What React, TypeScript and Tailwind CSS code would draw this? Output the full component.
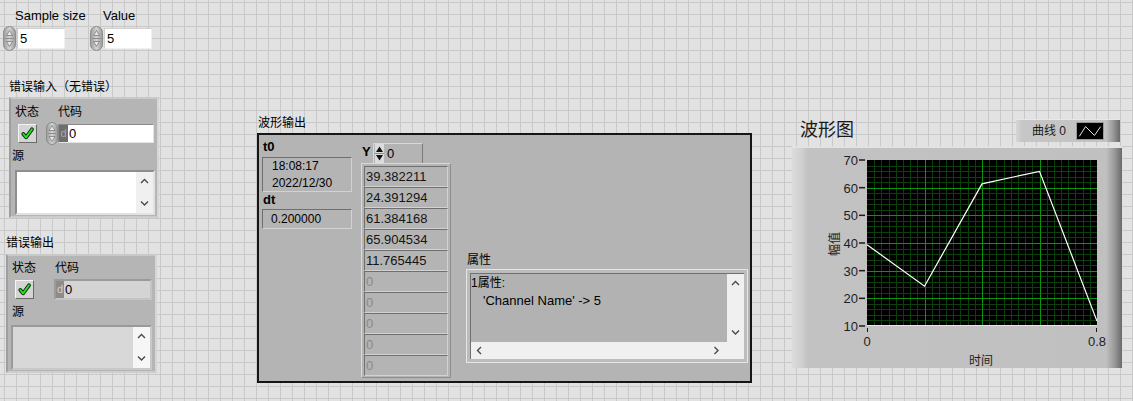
import { useId } from 'react'

const insetDark =
	'border border-t-[#6f6f6f] border-l-[#6f6f6f] border-r-[#d2d2d2] border-b-[#d2d2d2]'

function Spinner({ w = 13, h = 25 }: { w?: number; h?: number }) {
	const id = 'sp' + useId().replace(/[^a-zA-Z0-9]/g, '')
	const cx = w / 2
	const m = h / 2
	return (
		<svg width={w} height={h} viewBox={`0 0 ${w} ${h}`} className="shrink-0">
			<defs>
				<linearGradient id={id} x1="0" x2="1" y1="0" y2="0">
					<stop offset="0" stopColor="#9a9a9a" />
					<stop offset="0.5" stopColor="#d4d4d4" />
					<stop offset="1" stopColor="#989898" />
				</linearGradient>
			</defs>
			<rect
				x="0.5"
				y="0.5"
				width={w - 1}
				height={h - 1}
				rx={(w - 1) / 2}
				fill={`url(#${id})`}
				stroke="#8c8c8c"
			/>
			<line x1="2" x2={w - 2} y1={m} y2={m} stroke="#8c8c8c" />
			<path
				d={`M${cx - 3} ${m - 3} L${cx} ${m - 8} L${cx + 3} ${m - 3} Z`}
				fill="#e8e8e8"
				stroke="#7a7a7a"
				strokeWidth="0.8"
			/>
			<path
				d={`M${cx - 3} ${m + 3} L${cx} ${m + 8} L${cx + 3} ${m + 3} Z`}
				fill="#e8e8e8"
				stroke="#7a7a7a"
				strokeWidth="0.8"
			/>
		</svg>
	)
}

function StatusButton() {
	return (
		<div className="w-[19px] h-[19px] shrink-0 bg-[#d4d4d4] border border-t-[#f4f4f4] border-l-[#f4f4f4] border-r-[#6a6a6a] border-b-[#6a6a6a] flex items-center justify-center">
			<svg width="13" height="13" viewBox="0 0 14 14">
				<path
					d="M2.5 7.5 L5.5 11.2 L11.8 2.5"
					fill="none"
					stroke="#0a2a0a"
					strokeWidth="4"
					strokeLinecap="round"
					strokeLinejoin="round"
				/>
				<path
					d="M2.5 7.5 L5.5 11.2 L11.8 2.5"
					fill="none"
					stroke="#26e626"
					strokeWidth="2"
					strokeLinecap="round"
					strokeLinejoin="round"
				/>
			</svg>
		</div>
	)
}

function Chevron({ dir }: { dir: 'up' | 'down' | 'left' | 'right' }) {
	const d = {
		up: 'M1 5 L4.5 1.5 L8 5',
		down: 'M1 1.5 L4.5 5 L8 1.5',
		left: 'M5 1 L1.5 4.5 L5 8',
		right: 'M1.5 1 L5 4.5 L1.5 8',
	}[dir]
	const horiz = dir === 'up' || dir === 'down'
	return (
		<svg
			width={horiz ? 9 : 7}
			height={horiz ? 7 : 9}
			viewBox={horiz ? '0 0 9 7' : '0 0 7 9'}
		>
			<path d={d} fill="none" stroke="#4a4a4a" strokeWidth="1.4" />
		</svg>
	)
}

function VScroll({ bg }: { bg: string }) {
	return (
		<div className={`w-[17px] h-full flex flex-col items-center justify-between py-[6px] ${bg}`}>
			<Chevron dir="up" />
			<Chevron dir="down" />
		</div>
	)
}

function NumControl({ label, labelPad }: { label: string; labelPad: string }) {
	return (
		<div className="w-[62px] flex flex-col">
			<span className={`whitespace-nowrap leading-[14px] text-[13px] ${labelPad}`}>{label}</span>
			<div className="flex items-center mt-[3px]">
				<Spinner />
				<div className="ml-[1px] w-[48px] h-[21px] bg-white border border-t-[#cfcfcf] border-l-[#cfcfcf] border-r-[#f0f0f0] border-b-[#f0f0f0] pl-[2px] text-[13px] leading-[19px]">
					5
				</div>
			</div>
		</div>
	)
}

function ErrorIn() {
	return (
		<div className="ml-[9px] w-[150px] h-[121px] bg-[#b5b5b5] border-2 border-t-[#c9c9c9] border-l-[#9e9e9e] border-r-[#d6d6d6] border-b-[#cdcdcd] flex flex-col">
			<div className="flex pt-[6px] pl-[4px] text-[12px] leading-[14px]">
				<span className="w-[43px]">状态</span>
				<span>代码</span>
			</div>
			<div className="flex items-center h-[23px] mt-[3px]">
				<div className="ml-[7px]">
					<StatusButton />
				</div>
				<div className="ml-[9px]">
					<Spinner w={12} h={23} />
				</div>
				<div className="flex h-[19px] border border-t-[#8a8a8a] border-l-[#8a8a8a] border-r-[#e4e4e4] border-b-[#e4e4e4]">
					<span className="w-[9px] bg-[#6e6e6e] text-[#a9a9a9] text-[11px] leading-[17px] text-center">
						d
					</span>
					<span className="w-[85px] bg-white text-[13px] leading-[17px] pl-[1px]">0</span>
				</div>
			</div>
			<span className="mt-[4px] pl-[1px] text-[12px] leading-[14px]">源</span>
			<div className="mt-[7px] ml-[4px] w-[140px] h-[45px] flex border-2 border-t-[#8e8e8e] border-l-[#8e8e8e] border-r-[#e2e2e2] border-b-[#e2e2e2]">
				<div className="flex-1 bg-white" />
				<VScroll bg="bg-[#f0f0f0]" />
			</div>
		</div>
	)
}

function ErrorOut() {
	return (
		<div className="ml-[6px] w-[151px] h-[119px] bg-[#b5b5b5] border-2 border-t-[#c9c9c9] border-l-[#9e9e9e] border-r-[#d6d6d6] border-b-[#cdcdcd] flex flex-col">
			<div className="flex pt-[5px] pl-[4px] text-[12px] leading-[14px]">
				<span className="w-[43px]">状态</span>
				<span>代码</span>
			</div>
			<div className="flex items-center h-[23px] mt-[3px]">
				<div className="ml-[7px]">
					<StatusButton />
				</div>
				<div className="ml-[20px] flex w-[98px] h-[21px] border-2 border-t-[#9a9a9a] border-l-[#9a9a9a] border-r-[#c4c4c4] border-b-[#c4c4c4]">
					<span className="w-[8px] bg-[#8c8c8c] text-[#cfcfcf] text-[11px] leading-[17px] text-center">
						d
					</span>
					<span className="flex-1 bg-[#d4d4d4] text-[13px] leading-[17px] pl-[1px]">0</span>
				</div>
			</div>
			<span className="mt-[4px] pl-[4px] text-[12px] leading-[14px]">源</span>
			<div className="mt-[6px] ml-[3px] w-[141px] h-[45px] flex border-2 border-t-[#9a9a9a] border-l-[#9a9a9a] border-r-[#c8c8c8] border-b-[#c8c8c8]">
				<div className="flex-1 bg-[#d8d8d8]" />
				<VScroll bg="bg-[#f6f6f6]" />
			</div>
		</div>
	)
}

const yValues = ['39.382211', '24.391294', '61.384168', '65.904534', '11.765445', '0', '0', '0', '0', '0']

function WaveformOut() {
	return (
		<div className="ml-[97px] mt-[116px] flex flex-col">
			<span className="text-[12px] leading-[14px] pl-[1px]">波形输出</span>
			<div className="mt-[3px] w-[495px] h-[250px] bg-[#b4b4b4] border-2 border-[#161616] flex items-start">
				{/* t0 / dt */}
				<div className="ml-[3px] w-[90px] flex flex-col">
					<span className="pt-[5px] pl-[1px] font-bold text-[13px] leading-[14px]">t0</span>
					<div className={`mt-[3px] h-[35px] pl-[9px] text-[12px] leading-[16.5px] ${insetDark}`}>
						<div>18:08:17</div>
						<div>2022/12/30</div>
					</div>
					<span className="mt-[1px] pl-[1px] font-bold text-[13px] leading-[14px]">dt</span>
					<div className={`mt-[2px] h-[20px] pl-[8px] text-[12px] leading-[18px] ${insetDark}`}>
						0.200000
					</div>
				</div>
				{/* Y array */}
				<div className="ml-[9px] mt-[8px] flex flex-col">
					<div className="flex items-start">
						<span className="pl-[1px] w-[12px] font-bold text-[13px] leading-[14px] mt-[2px]">Y</span>
						<div className="w-[50px] h-[21px] flex items-center bg-[#b4b4b4] border border-t-[#d8d8d8] border-l-[#d8d8d8] border-r-[#7a7a7a] border-b-[#7a7a7a]">
							<svg width="9" height="19" viewBox="0 0 9 19" className="ml-[1px] bg-[#dcdcdc]">
								<path d="M1 8 L4.5 2.5 L8 8 Z" fill="#111" />
								<line x1="0" x2="9" y1="9.5" y2="9.5" stroke="#8a8a8a" />
								<path d="M1 11 L8 11 L4.5 16.5 Z" fill="#111" />
							</svg>
							<span className="ml-[3px] text-[13px] leading-[14px]">0</span>
						</div>
					</div>
					<div className="-mt-[1px] w-[90px] h-[215px] p-[2px] border border-t-[#dadada] border-l-[#dadada] border-r-[#8e8e8e] border-b-[#8e8e8e] flex flex-col">
						{yValues.map((v, i) => (
							<div
								key={i}
								className={`h-[21px] pl-[1px] text-[13px] leading-[19px] ${insetDark} ${
									i < 5 ? 'text-[#141414]' : 'text-[#8a8a8a]'
								}`}
							>
								{v}
							</div>
						))}
					</div>
				</div>
				{/* attributes */}
				<div className="ml-[15px] mt-[118px] flex flex-col">
					<span className="pl-[1px] text-[12px] leading-[14px]">属性</span>
					<div className="mt-[2px] w-[282px] h-[94px] border border-[#e6e6e6] bg-[#bcbcbc] p-[3px]">
						<div className="w-full h-full flex flex-col border-t border-l border-[#707070]">
							<div className="flex flex-1">
								<div className="flex-1 bg-[#b2b2b2] text-[12px] leading-[17px] pt-[1px]">
									<div>1属性:</div>
									<div className="pl-[12px] text-[13px]">'Channel Name' -&gt; 5</div>
								</div>
								<VScroll bg="bg-[#f0f0f0]" />
							</div>
							<div className="h-[17px] flex items-center justify-between bg-[#f0f0f0] pl-[5px] pr-[24px]">
								<Chevron dir="left" />
								<Chevron dir="right" />
							</div>
						</div>
					</div>
				</div>
			</div>
		</div>
	)
}

// plot area inside the graph frame
const PX0 = 75
const PX1 = 305
const PY0 = 10
const PY1 = 176
const data = [39.382211, 24.391294, 61.384168, 65.904534, 11.765445]

function Graph() {
	const px = (t: number) => PX0 + (t / 0.8) * (PX1 - PX0)
	const py = (v: number) => PY0 + ((70 - v) / 60) * (PY1 - PY0)
	const minorX = Array.from({ length: 33 }, (_, i) => PX0 + (i * (PX1 - PX0)) / 32)
	const minorY = Array.from({ length: 31 }, (_, i) => PY0 + (i * (PY1 - PY0)) / 30)
	const pts = data.map((v, i) => `${px(i * 0.2)},${py(v)}`).join(' ')
	const ticks = [70, 60, 50, 40, 30, 20, 10]

	return (
		<div className="ml-[40px] mt-[119px] w-[330px] flex flex-col">
			<div className="flex items-start h-[23px]">
				<span className="pl-[8px] text-[18px] leading-[23px] text-[#1a1a1a]">波形图</span>
				<div className="ml-auto mr-[2px] w-[104px] h-[23px] flex items-center border-t border-[#e8e8e8] bg-[linear-gradient(to_right,#d6d6d6_0px,#c6c6c6_6px,#c2c2c2_90px,#9a9a9a_97px,#6a6a6a_104px)]">
					<span className="pl-[16px] text-[12px] leading-[14px] text-[#1a1a1a]">曲线 0</span>
					<svg width="28" height="18" viewBox="0 0 28 18" className="ml-[10px] bg-black border border-[#9a9a9a]">
						<polyline points="2,15 9,4 19,14 26,4" fill="none" stroke="#fff" strokeWidth="1" />
					</svg>
				</div>
			</div>
			<div className="mt-[4px] w-[330px] h-[222px] border-t-2 border-[#e2e2e2] bg-[linear-gradient(to_right,#dcdcdc_0px,#cfcfcf_10px,#c2c2c2_16px,#c0c0c0_314px,#9c9c9c_322px,#6a6a6a_330px)]">
				<svg width="330" height="220" viewBox="0 -2 330 220" className="block">
					<rect x={PX0} y={PY0} width={PX1 - PX0} height={PY1 - PY0} fill="#000" />
					{minorX.map((x, i) =>
						i % 8 === 0 ? null : (
							<line
								key={'mx' + i}
								x1={Math.round(x) + 0.5}
								x2={Math.round(x) + 0.5}
								y1={PY0}
								y2={PY1}
								stroke="#0b400b"
							/>
						),
					)}
					{minorY.map((y, i) =>
						i % 5 === 0 ? null : (
							<line
								key={'my' + i}
								x1={PX0}
								x2={PX1}
								y1={Math.round(y) + 0.5}
								y2={Math.round(y) + 0.5}
								stroke="#0b400b"
							/>
						),
					)}
					{minorX.map((x, i) =>
						i % 8 === 0 && i > 0 && i < 32 ? (
							<line
								key={'Mx' + i}
								x1={Math.round(x) + 0.5}
								x2={Math.round(x) + 0.5}
								y1={PY0}
								y2={PY1}
								stroke="#0a950a"
							/>
						) : null,
					)}
					{minorY.map((y, i) =>
						i % 5 === 0 && i > 0 && i < 30 ? (
							<line
								key={'My' + i}
								x1={PX0}
								x2={PX1}
								y1={Math.round(y) + 0.5}
								y2={Math.round(y) + 0.5}
								stroke="#0a950a"
							/>
						) : null,
					)}
					<line x1={PX0} x2={PX1} y1={PY1 - 0.5} y2={PY1 - 0.5} stroke="#e6e6e6" />
					<polyline points={pts} fill="none" stroke="#fff" strokeWidth="1.2" />
					{ticks.map((t) => (
						<g key={t}>
							<line x1={67} x2={73} y1={py(t)} y2={py(t)} stroke="#1a1a1a" strokeWidth="1.5" />
							<text
								x={66}
								y={py(t) + 5}
								textAnchor="end"
								fontSize="13"
								fill="#1e1e1e"
								fontFamily="Liberation Sans, sans-serif"
							>
								{t}
							</text>
						</g>
					))}
					<line x1={PX0 + 0.5} x2={PX0 + 0.5} y1={PY1 + 2} y2={PY1 + 6} stroke="#1a1a1a" />
					<line x1={PX1 - 0.5} x2={PX1 - 0.5} y1={PY1 + 2} y2={PY1 + 6} stroke="#1a1a1a" />
					<text x={PX0} y={196} textAnchor="middle" fontSize="13" fill="#1e1e1e" fontFamily="Liberation Sans, sans-serif">
						0
					</text>
					<text x={PX1} y={196} textAnchor="middle" fontSize="13" fill="#1e1e1e" fontFamily="Liberation Sans, sans-serif">
						0.8
					</text>
					<text
						x={189}
						y={215}
						textAnchor="middle"
						fontSize="12"
						fill="#1e1e1e"
						fontFamily="Noto Sans CJK SC, sans-serif"
					>
						时间
					</text>
					<text
						x={0}
						y={0}
						transform="translate(41 94) rotate(-90)"
						textAnchor="middle"
						dominantBaseline="central"
						fontSize="12"
						fill="#1e1e1e"
						fontFamily="Noto Sans CJK SC, sans-serif"
					>
						幅值
					</text>
				</svg>
			</div>
		</div>
	)
}

export default function App() {
	return (
		<div className="w-[1133px] h-[401px] overflow-hidden text-black font-['Liberation_Sans','Noto_Sans_CJK_SC',sans-serif] bg-[#e2e2e2] bg-[linear-gradient(to_right,#c9c9c9_1px,transparent_1px),linear-gradient(to_bottom,#c9c9c9_1px,transparent_1px)] bg-size-[12px_12px] bg-position-[4px_2px]">
			<div className="flex items-start">
				{/* left column: numeric controls and error clusters */}
				<div className="w-[160px] flex flex-col">
					<div className="flex pt-[9px] pl-[3px]">
						<NumControl label="Sample size" labelPad="pl-[12px]" />
						<div className="ml-[25px]">
							<NumControl label="Value" labelPad="pl-[13px]" />
						</div>
					</div>
					<span className="mt-[29px] pl-[9px] text-[12px] leading-[14px]">错误输入（无错误）</span>
					<div className="mt-[3px]">
						<ErrorIn />
					</div>
					<span className="mt-[18px] pl-[6px] text-[12px] leading-[14px]">错误输出</span>
					<div className="mt-[4px]">
						<ErrorOut />
					</div>
				</div>
				<WaveformOut />
				<Graph />
			</div>
		</div>
	)
}
